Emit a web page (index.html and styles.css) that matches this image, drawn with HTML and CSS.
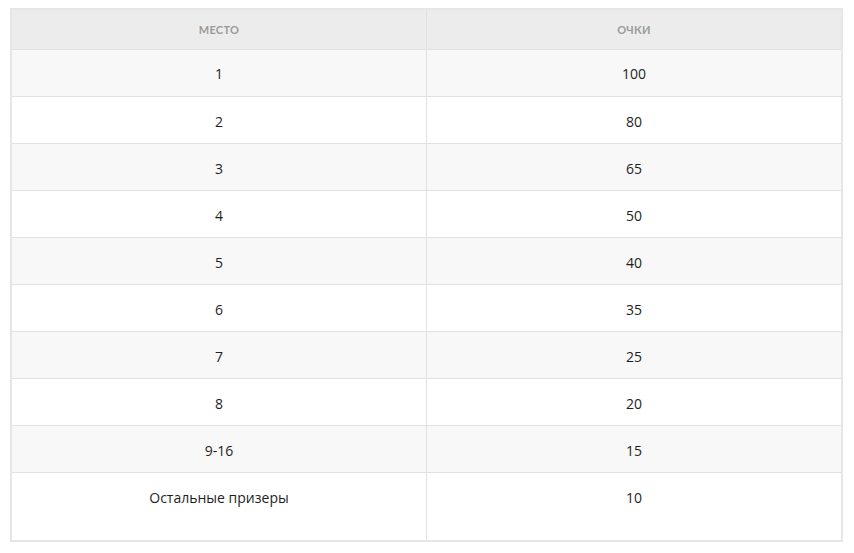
FILE: index.html
```html
<!DOCTYPE html>
<html lang="ru">
<head>
<meta charset="utf-8">
<link rel="stylesheet" href="styles.css">
</head>
<body>
<table class="points">
  <thead>
    <tr><th>Место</th><th>Очки</th></tr>
  </thead>
  <tbody>
    <tr class="first"><td>1</td><td>100</td></tr>
    <tr><td>2</td><td>80</td></tr>
    <tr><td>3</td><td>65</td></tr>
    <tr><td>4</td><td>50</td></tr>
    <tr><td>5</td><td>40</td></tr>
    <tr><td>6</td><td>35</td></tr>
    <tr><td>7</td><td>25</td></tr>
    <tr><td>8</td><td>20</td></tr>
    <tr><td>9-16</td><td>15</td></tr>
    <tr class="last"><td>Остальные призеры</td><td>10</td></tr>
  </tbody>
</table>
</body>
</html>
```
FILE: styles.css
```css
html, body {
  margin: 0;
  padding: 0;
  background: #ffffff;
}
body {
  padding: 8px 0 0 10px;
  font-family: "Open Sans", Lato, "Liberation Sans", sans-serif;
}
.points {
  width: 833px;
  border-collapse: collapse;
  table-layout: fixed;
  border: 2px solid #e6e6e6;
}
.points th,
.points td {
  border: 1px solid #e2e2e2;
  text-align: center;
  width: 50%;
}
.points th {
  height: 39px;
  padding: 0;
  background: #ececec;
  color: #9a9a9a;
  font-family: Lato, "Open Sans", sans-serif;
  font-size: 11px;
  font-weight: 700;
  text-transform: uppercase;
  letter-spacing: 0.3px;
  vertical-align: middle;
}
.points td {
  box-sizing: border-box;
  height: 47px;
  padding: 4px 0 0;
  color: #1e1e1e;
  font-size: 14px;
  line-height: 18px;
  vertical-align: middle;
}
.points tr.first td {
  padding-top: 2px;
}
.points tbody tr:nth-child(odd) td {
  background: #f8f8f8;
}
.points tbody tr:nth-child(even) td {
  background: #ffffff;
}
.points tr.last td {
  height: 68px;
  vertical-align: top;
  padding-top: 16px;
}
```
